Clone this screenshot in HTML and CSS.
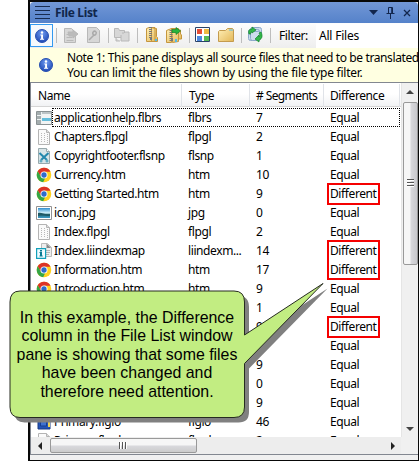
FILE: index.html
```html
<!DOCTYPE html>
<html lang="en">
<head>
<meta charset="utf-8">
<title>File List</title>
<link rel="stylesheet" href="styles.css">
</head>
<body>
<svg class="defs" width="0" height="0">
  <defs>
    <linearGradient id="gold" x1="0" y1="0" x2="1" y2="1"><stop offset="0" stop-color="#fff0b8"/><stop offset="1" stop-color="#e3b757"/></linearGradient>
    <radialGradient id="blue" cx=".5" cy=".3" r=".7"><stop offset="0" stop-color="#6e9aef"/><stop offset="1" stop-color="#1e48b4"/></radialGradient>
    <linearGradient id="sky" x1="0" y1="0" x2="0" y2="1"><stop offset="0" stop-color="#2f8fd0"/><stop offset=".5" stop-color="#d5f2fa"/><stop offset=".65" stop-color="#276f7c"/><stop offset="1" stop-color="#3d9bc8"/></linearGradient>
    <symbol id="info" viewBox="0 0 14 14"><circle cx="7" cy="7" r="6.5" fill="url(#blue)" stroke="#2850b0"/><circle cx="7" cy="3.5" r="1.2" fill="#fff"/><path d="M5.3 5.5H8v4.3h1.1v1H5v-1h1.1V6.5h-.8z" fill="#fff"/></symbol>
    <symbol id="chrome" viewBox="-.5 -.5 15 15"><circle cx="7" cy="7" r="6.8" fill="#ffd21f"/><path d="M1.1 3.6A6.8 6.8 0 0 1 13.1 4H7L4 8.6z" fill="#dc3328"/><path d="M1.1 3.6 4.2 8.7 8 10 6.2 13.8A6.8 6.8 0 0 1 1.1 3.6" fill="#35a646"/><circle cx="7" cy="7" r="3.3" fill="#fff"/><circle cx="7" cy="7" r="2.5" fill="#2d6ccb"/></symbol>
    <symbol id="page" viewBox="0 0 14 16"><path d="M1.5 .5h8l3 3v12h-11z" fill="#fafafa" stroke="#b4b4b4"/><path d="M9.500 .5v3h3" fill="#ddd" stroke="#b4b4b4"/><path d="M4.500 4v10M7.500 4v10M10.500 5v9" stroke="#b8b8b8" stroke-dasharray="1 1"/></symbol>
    <symbol id="browse" viewBox="0 0 16 16"><path d="M.5 1.500h15v13H.5z" fill="#f2f4f4" stroke="#8a9294"/><path d="M1 2h4v12H1z" fill="#a4adaf"/><path d="M5 2h10v2H5z" fill="#bcc4c6"/><path d="M5 8h10v3H5z" fill="#64bddb"/><path d="M1 5.500h4M1 9.500h4M5.500 2v12" stroke="#edf2f3"/></symbol>
    <symbol id="snip" viewBox="0 0 14 16"><path d="M1.500 .5h8l3 3v12h-11z" fill="#d9e5e8" stroke="#98a9ad"/><path d="M9.500 .5v3h3" fill="#fff" stroke="#98a9ad"/><path d="m2.500 5 7.500 7M11.500 5 4 12" stroke="#2588ad" stroke-width="2"/><circle cx="4" cy="13" r="1.500" fill="#64acc2"/><circle cx="10" cy="13" r="1.500" fill="#64acc2"/></symbol>
    <symbol id="image" viewBox="0 0 16 14"><path d="M.5 .5h15v13H.5z" fill="#fff" stroke="#929292"/><path d="M2 2h12v10H2z" fill="url(#sky)"/><path d="M2 7c4-1 6 2 12 1v2c-5 0-8-1-12 0z" fill="#205965"/></symbol>
    <symbol id="map" viewBox="0 0 16 16"><path d="M5.500 .5h6l4 4v9h-10z" fill="#eee" stroke="#bbb"/><path d="M10.500 .5 15 5h-4.500z" fill="#888"/><path d="M10 7.500h4M10 9.500h4M10 11.500h3" stroke="#b4b4b4"/><path d="M.6 5.600h9v9.800h-9z" fill="#effbff" stroke="#12a0ba" stroke-width="1.200"/><path d="M4 7h2v1.400H4zM3.500 9H6v3.500h.7v1H3.500v-1H4V10h-.5z" fill="#087b93"/></symbol>
    <symbol id="book" viewBox="0 0 14 16"><path d="M1 1h12v14H1z" fill="#2455b8" stroke="#193a83"/><path d="M11 1h2v12h-2z" fill="#ead152"/><path d="M3.500 3h6v9h-6z" fill="#3f72cf" stroke="#173f91"/></symbol>
  </defs>
</svg>

<div class="window">
  <header class="title">
    <i class="grip"></i><b>File List</b>
    <svg class="controls" width="44" height="14" viewBox="0 0 44 14"><path d="M0 4h9L4.500 9z" fill="#12264d"/><path d="M19.500 1.500h4v6h-4zM17.500 7.500h8M21.500 8v5M22.700 2v5" fill="none" stroke="#12264d"/><path d="m35 4 6 6m0-6-6 6" stroke="#12264d" stroke-width="1.300"/></svg>
  </header>

  <div class="toolbar">
    <span class="pressed"><svg width="14" height="14"><use href="#info"/></svg></span>
    <svg class="tools" width="182" height="24" viewBox="53 24 182 24">
      <path d="M56.500 28v15M108.500 28v15M137.500 28v15M189.500 28v15" stroke="#bdbdbd"/>
      <g fill="#d7d7d7" stroke="#b8b8b8"><path d="M64.500 28.500h7l4 4v10h-11z"/><path d="M66.500 34.500h5M66.500 37.500h6M66.500 40.500h7" fill="none"/><path d="M68 32h5v-2l5 4-5 4v-2h-4z" fill="#bbb"/><path d="M87.500 27.500h9l3 3v12h-12z"/><path d="m89 40 5-5m-1-3c2-2 4 0 3 2s-4 1-3-2" fill="none" stroke="#aaa" stroke-width="1.500"/><path d="M114.500 28.500h4l1 2h5v7h-10z"/><path d="M122 33h2l1-1h4v9h-8v-6M116 38v3h4" /></g>
      <g fill="url(#gold)" stroke="#c5963d"><path d="M146.500 28.500 149 27.500h6v14h-8.500zM155.500 28.500h1v8l1 1v4h-6v-14z"/><path d="M166.500 30.500l5-2v14h-5zM171.500 28.500h7v13l-6 1zM178.500 30h2v4l1 1v4h-3z"/></g>
      <path d="M150.500 27v11M171 30v11" stroke="#777" stroke-width="3" stroke-dasharray="1 1"/><path d="M150 37h2v3h-2zM171 38h2v3h-2z" fill="#777"/><path d="M155 39h2v2h-2zM175 39h2v3h-2z" fill="#54b9e5"/>
      <path d="M172 29.500h4v-2l4.500 3.500-4.500 3.500v-2h-4z" fill="#27b53d" stroke="#148024" stroke-width=".7"/>
      <path d="M195.500 27.500h14v14h-14z" fill="#fff" stroke="#294269"/><path d="M197 29h5v5h-5z" fill="#e44d35"/><path d="M204 29h5v5h-5z" fill="#eebb43"/><path d="M197 36h5v5h-5z" fill="#4e89df"/><path d="M204 36h5v5h-5z" fill="#58ba55"/>
      <path d="M218.500 41.500v-10l1-1h6l2-2h5l1 1v12z" fill="url(#gold)" stroke="#c49b4d"/><path d="M229 30h4" stroke="#54b9e5"/>
    </svg>
    <svg width="38" height="24" viewBox="235 24 38 24"><path d="M241.500 28v15M270.500 28v15" stroke="#bdbdbd"/><g fill="#cbdcec" stroke="#8ba8c8"><rect x="250.500" y="27.500" width="11" height="11" rx="2"/><rect x="248.500" y="29.500" width="11" height="11" rx="2"/><rect x="250.500" y="31.500" width="10" height="9" rx="2"/></g><path d="M249 34c-1-3 0-5 3-5v-2l4 3-4 3v-1c-2 0-2 1-1 2zM261 32c2 4 1 7-2 8v2l-4-3 4-4v2c1-1 1-2 0-4z" fill="#32b84a" stroke="#16852c" stroke-width=".7"/></svg>
    <span class="label">Filter:</span><span class="filter">All Files</span>
  </div>

  <div class="note"><svg width="14" height="14"><use href="#info"/></svg><div><p class="line1">Note 1: This pane displays all source files that need to be translated</p><p>You can limit the files shown by using the file type filter.</p></div></div>

  <main class="view">
    <section class="list">
      <div class="row head"><span>Name</span><span>Type</span><span># Segments</span><span>Difference</span></div>
      <div class="rows">
        <div class="row focus"><svg><use href="#browse"/></svg><span class="n0">applicationhelp.flbrs</span><span>flbrs</span><span>7</span><span>Equal</span></div>
        <div class="row"><svg><use href="#page"/></svg><span>Chapters.flpgl</span><span>flpgl</span><span>2</span><span>Equal</span></div>
        <div class="row"><svg><use href="#snip"/></svg><span>Copyrightfooter.flsnp</span><span>flsnp</span><span>1</span><span>Equal</span></div>
        <div class="row"><svg><use href="#chrome"/></svg><span>Currency.htm</span><span>htm</span><span>10</span><span>Equal</span></div>
        <div class="row"><svg><use href="#chrome"/></svg><span>Getting Started.htm</span><span>htm</span><span>9</span><span class="diff">Different</span></div>
        <div class="row"><svg><use href="#image"/></svg><span>icon.jpg</span><span>jpg</span><span>0</span><span>Equal</span></div>
        <div class="row"><svg><use href="#page"/></svg><span>Index.flpgl</span><span>flpgl</span><span>2</span><span>Equal</span></div>
        <div class="row"><svg><use href="#map"/></svg><span>Index.liindexmap</span><span>liindexm...</span><span>14</span><span class="diff two">Different</span></div>
        <div class="row"><svg><use href="#chrome"/></svg><span>Information.htm</span><span>htm</span><span>17</span><span>Different</span></div>
        <div class="row"><svg><use href="#chrome"/></svg><span>Introduction.htm</span><span>htm</span><span>9</span><span>Equal</span></div>
        <div class="row"><svg></svg><span></span><span></span><span>1</span><span>Equal</span></div>
        <div class="row"><svg></svg><span></span><span></span><span>9</span><span class="diff">Different</span></div>
        <div class="row"><svg></svg><span></span><span></span><span>2</span><span>Equal</span></div>
        <div class="row"><svg></svg><span></span><span></span><span>9</span><span>Equal</span></div>
        <div class="row"><svg></svg><span></span><span></span><span>0</span><span>Equal</span></div>
        <div class="row"><svg></svg><span></span><span></span><span>9</span><span>Equal</span></div>
        <div class="row"><svg><use href="#book"/></svg><span>Primary.flglo</span><span>flglo</span><span>46</span><span>Equal</span></div>
        <div class="row"><svg><use href="#page"/></svg><span>Primary.flpgl</span><span>flpgl</span><span>2</span><span>Equal</span></div>
      </div>
    </section>
    <div class="vbar"><i class="arrow up"></i><div class="vthumb"><i></i></div><i class="arrow down"></i></div>
    <div class="hbar"><i class="arrow left"></i><div class="hthumb"><i></i></div><i class="arrow right"></i></div>
    <div class="corner"></div>
  </main>
</div>

<aside class="callout">
  <svg width="330" height="150" viewBox="0 280 330 150"><defs><path id="bubble" d="M20 291H234Q244.500 291 244.500 302V335L323 283.500 244.500 363.500V407Q244.500 417.500 234 417.500H20Q10 417.500 10 407V302Q10 291 20 291Z"/></defs><use href="#bubble" x="4.500" y="5" fill="#808080"/><use href="#bubble" fill="#c2ed82" stroke="#262b20"/></svg>
  <p><span>In this example, the Difference</span><span>column in the File List window</span><span>pane is showing that some files</span><span>have been changed and</span><span>therefore need attention.</span></p>
</aside>
</body>
</html>
```
FILE: styles.css
```css
*, *::before, *::after { box-sizing: border-box; }
body { margin: 0; width: 419px; height: 461px; position: relative; overflow: hidden; background: #fff; font: 12px/19px "Noto Sans", sans-serif; letter-spacing: -.4px; color: #000; }
p { margin: 0; }
.defs { position: absolute; }
.window { margin-left: 28px; height: 461px; border: solid #080808; border-width: 2px 1px 1px 2px; background: #f0f0f0; display: flex; flex-direction: column; }
.title { height: 21px; display: flex; align-items: center; padding: 0 5px; background: linear-gradient(#7297d6, #5582ca); border-radius: 4px 4px 0 0; color: #10264b; font-size: 12px; }
.title b { margin-left: 5px; letter-spacing: -.35px; }
.grip { width: 15px; height: 13px; background: repeating-linear-gradient(#172b50 0 1px, transparent 1px 4px); }
.controls { margin-left: auto; }
.toolbar { height: 25px; display: flex; align-items: center; background: linear-gradient(#fdfdfd, #eee); white-space: nowrap; }
.pressed { width: 23px; height: 23px; border: 1px solid #3399f0; display: grid; place-items: center; background: #f5f9fd; }
.label { width: 43px; padding-left: 6px; }
.filter { flex: 1; height: 24px; line-height: 23px; padding-left: 3px; background: #fff; letter-spacing: -.2px; }
.note { height: 34px; display: flex; align-items: center; gap: 14px; padding-left: 9px; background: #ffffe1; line-height: 15px; white-space: nowrap; letter-spacing: -.25px; }
.note .line1 { letter-spacing: -.39px; }
.note svg { flex: none; }
.view { height: 373px; border: solid #828790; border-width: 1px 0 1px 1px; display: grid; grid-template: 1fr 17px / 1fr 17px; background: #fff; }
.list { overflow: hidden; min-height: 0; min-width: 0; padding-top: 1px; }
.row { display: grid; grid-template-columns: 16px 131px 68px 74px 1fr; height: 19px; padding-left: 5px; white-space: nowrap; }
.row > span { padding-left: 2px; position: relative; }
.row > span:nth-child(n+3) { padding-left: 5px; }
.row > svg { width: 16px; height: 16px; align-self: center; }
.row.head { grid-template-columns: 151px 68px 74px 76px; height: 23px; line-height: 23px; padding: 0; background: linear-gradient(#fff 45%, #f1f2f4); border-bottom: 1px solid #d5d5d5; }
.row.head > span { padding-left: 7px; border-right: 1px solid #e0e3e8; }
.row.head > span:nth-child(3) { letter-spacing: -.6px; }
.row.head > span:nth-child(n+3) { padding-left: 6px; }
.rows { padding-top: 1px; }
.focus .n0::before { content: ""; position: absolute; left: 0; top: 0; width: 348px; height: 19px; border: 1px dotted #000; }
.diff::after { content: ""; position: absolute; left: 2px; top: -1px; width: 53px; height: 22px; border: 2px solid #f50000; }
.diff.two::after { height: 40px; }
.vbar { background: #f0f0f0; display: flex; flex-direction: column; align-items: center; border-left: 1px solid #e5e5e5; }
.vthumb { width: 15px; height: 163px; display: grid; place-items: center; border: 1px solid #999; border-radius: 2px; background: linear-gradient(90deg, #f6f6f6 45%, #d8d8dc 55%, #c8c8cc); }
.vthumb i { width: 7px; height: 9px; background: repeating-linear-gradient(#555 0 1px, #fff 1px 2px, transparent 2px 3px); }
.arrow { width: 0; height: 0; border: 4px solid transparent; }
.up { border-bottom-color: #444; border-top: 0; margin: 7px 0 8px; }
.down { border-top-color: #444; border-bottom: 0; margin: auto 0 6px; }
.hbar { background: #ededed; display: flex; align-items: center; }
.corner { background: #f0f0f0; }
.hthumb { width: 147px; height: 15px; display: grid; place-items: center; border: 1px solid #999; border-radius: 2px; background: linear-gradient(#f6f6f6 45%, #d8d8dc 55%, #ccc); }
.hthumb i { width: 9px; height: 7px; background: repeating-linear-gradient(90deg, #555 0 1px, #fff 1px 2px, transparent 2px 3px); }
.left { border-right-color: #222; border-left: 0; margin: 0 8px 0 7px; }
.right { border-left-color: #222; border-right: 0; margin: 0 6px 0 auto; }
.callout { position: absolute; left: 0; top: 280px; width: 330px; height: 150px; }
.callout p { position: absolute; left: 10px; top: 29px; width: 234px; display: flex; flex-direction: column; align-items: center; font: 15.900px/18.400px "Liberation Sans", sans-serif; letter-spacing: 0; white-space: nowrap; }
```
